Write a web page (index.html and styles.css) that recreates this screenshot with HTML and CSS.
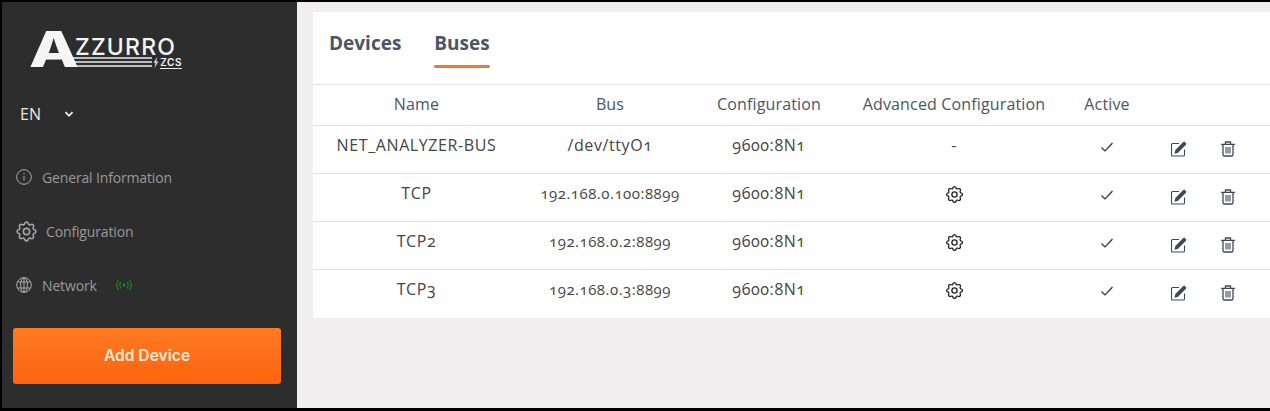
FILE: index.html
```html
<!DOCTYPE html>
<html lang="en">
<head>
<meta charset="utf-8">
<title>Azzurro ZCS - Buses</title>
<link rel="stylesheet" href="styles.css">
</head>
<body>
<div class="app">
  <aside class="sidebar">
    <div class="logo">
      <div class="logo-mark"><span class="logo-a">A</span></div>
      <div class="logo-right">
        <div class="logo-word">ZZURRO</div>
        <div class="logo-base">
          <div class="logo-stripes"><i></i><i></i><i></i></div>
          <svg class="bolt" viewBox="0 0 6 11"><path d="M4 0 .5 6h2L1.500 11 5.500 4.500h-2z" fill="currentColor"/></svg>
          <span class="logo-zcs">ZCS</span>
        </div>
      </div>
    </div>
    <div class="lang"><span>EN</span>
      <svg class="chev" viewBox="0 0 12 12"><path d="M2.500 4.200 6 7.800l3.500-3.600" fill="none" stroke="currentColor" stroke-width="1.800"/></svg>
    </div>
    <nav class="nav">
      <a class="nav-item">
        <svg class="nav-ic" viewBox="0 0 16 16" fill="none" stroke="currentColor"><circle cx="8" cy="8" r="7.300"/><path d="M8 7v4.500" stroke-width="1.100"/><circle cx="8" cy="4.800" r=".7" fill="currentColor" stroke="none"/></svg>
        <span>General Information</span>
      </a>
      <a class="nav-item">
        <svg class="nav-ic gear-lg" viewBox="0 0 24 24"><use href="#gear"/></svg>
        <span>Configuration</span>
      </a>
      <a class="nav-item">
        <svg class="nav-ic" viewBox="0 0 16 16" fill="none" stroke="currentColor" stroke-width="1"><circle cx="8" cy="8" r="7.300"/><ellipse cx="8" cy="8" rx="3.400" ry="7.300"/><path d="M8 .7v14.600M1.400 5h13.200M1.400 11h13.200"/></svg>
        <span>Network</span>
        <svg class="signal" viewBox="0 0 18 12" fill="none" stroke="currentColor" stroke-width="1.100"><circle cx="9" cy="6" r="1.400" fill="currentColor" stroke="none"/><path d="M6 3a4.200 4.200 0 0 0 0 6M12 3a4.200 4.200 0 0 1 0 6M3.600 1a7.500 7.500 0 0 0 0 10M14.400 1a7.500 7.500 0 0 1 0 10"/></svg>
      </a>
    </nav>
    <button class="add-btn">Add Device</button>
  </aside>
  <main class="main">
    <section class="card">
      <div class="tabs">
        <div class="tab">Devices</div>
        <div class="tab active">Buses</div>
      </div>
      <table class="grid">
        <colgroup><col class="c1"><col class="c2"><col class="c3"><col class="c4"><col class="c5"><col class="c6"><col class="c7"><col></colgroup>
        <thead>
          <tr><th>Name</th><th>Bus</th><th>Configuration</th><th>Advanced Configuration</th><th>Active</th><th></th><th></th><th></th></tr>
        </thead>
        <tbody>
          <tr>
            <td class="name">NET_ANALYZER-BUS</td><td class="txt">/dev/ttyO1</td><td class="txt">9600:8N1</td><td class="txt">-</td>
            <td><svg class="ic check" viewBox="0 0 14 12"><use href="#check"/></svg></td>
            <td class="act"><svg class="ic" viewBox="0 0 16 16"><use href="#edit"/></svg></td>
            <td class="act"><svg class="ic" viewBox="0 0 16 16"><use href="#trash"/></svg></td><td></td>
          </tr>
          <tr>
            <td class="name">TCP</td><td class="txt sm">192.168.0.100:8899</td><td class="txt">9600:8N1</td>
            <td><svg class="ic gear" viewBox="0 0 24 24"><use href="#gear"/></svg></td>
            <td><svg class="ic check" viewBox="0 0 14 12"><use href="#check"/></svg></td>
            <td class="act"><svg class="ic" viewBox="0 0 16 16"><use href="#edit"/></svg></td>
            <td class="act"><svg class="ic" viewBox="0 0 16 16"><use href="#trash"/></svg></td><td></td>
          </tr>
          <tr>
            <td class="name">TCP2</td><td class="txt sm">192.168.0.2:8899</td><td class="txt">9600:8N1</td>
            <td><svg class="ic gear" viewBox="0 0 24 24"><use href="#gear"/></svg></td>
            <td><svg class="ic check" viewBox="0 0 14 12"><use href="#check"/></svg></td>
            <td class="act"><svg class="ic" viewBox="0 0 16 16"><use href="#edit"/></svg></td>
            <td class="act"><svg class="ic" viewBox="0 0 16 16"><use href="#trash"/></svg></td><td></td>
          </tr>
          <tr>
            <td class="name">TCP3</td><td class="txt sm">192.168.0.3:8899</td><td class="txt">9600:8N1</td>
            <td><svg class="ic gear" viewBox="0 0 24 24"><use href="#gear"/></svg></td>
            <td><svg class="ic check" viewBox="0 0 14 12"><use href="#check"/></svg></td>
            <td class="act"><svg class="ic" viewBox="0 0 16 16"><use href="#edit"/></svg></td>
            <td class="act"><svg class="ic" viewBox="0 0 16 16"><use href="#trash"/></svg></td><td></td>
          </tr>
        </tbody>
      </table>
    </section>
  </main>
</div>
<svg class="defs" width="0" height="0">
  <defs>
    <g id="gear" fill="none" stroke="currentColor" stroke-width="1.500" stroke-linejoin="round">
      <path d="M10.325 4.317c.426-1.756 2.924-1.756 3.350 0a1.724 1.724 0 0 0 2.573 1.066c1.543-.94 3.310.826 2.370 2.370a1.724 1.724 0 0 0 1.065 2.572c1.756.426 1.756 2.924 0 3.350a1.724 1.724 0 0 0-1.066 2.573c.94 1.543-.826 3.310-2.370 2.370a1.724 1.724 0 0 0-2.572 1.065c-.426 1.756-2.924 1.756-3.350 0a1.724 1.724 0 0 0-2.573-1.066c-1.543.94-3.310-.826-2.370-2.370a1.724 1.724 0 0 0-1.065-2.572c-1.756-.426-1.756-2.924 0-3.350a1.724 1.724 0 0 0 1.066-2.573c-.94-1.543.826-3.310 2.370-2.370c1 .608 2.296.07 2.572-1.065z"/>
      <circle cx="12" cy="12" r="3"/>
    </g>
    <path id="check" d="M1.500 6.500 5 10l7.500-8" fill="none" stroke="currentColor" stroke-width="1.200"/>
    <g id="edit">
      <path d="M13.500 8.500V14a1 1 0 0 1-1 1H1.500a1 1 0 0 1-1-1V3.500a1 1 0 0 1 1-1H8" fill="none" stroke="currentColor" stroke-width="1.100"/>
      <path d="M13 .3 15.700 3 7 11.800l-3.600.9.900-3.600z" fill="currentColor"/>
    </g>
    <g id="trash" fill="none" stroke="currentColor" stroke-width="1.300">
      <path d="M1 3.300h14M5.500 3V1h5v2"/>
      <path d="M3 3.500v10.200A1.300 1.300 0 0 0 4.300 15h7.400a1.300 1.300 0 0 0 1.300-1.300V3.500"/>
      <path d="M6 6v6.500M8 6v6.500M10 6v6.500" stroke-width="1.100"/>
    </g>
  </defs>
</svg>
</body>
</html>
```
FILE: styles.css
```css
* { box-sizing: border-box; }
html, body { margin: 0; height: 100%; }
body {
  width: 1270px;
  height: 411px;
  overflow: hidden;
  background: #000;
  font-family: "Open Sans", "Noto Sans", sans-serif;
  font-feature-settings: "onum" 1;
  color: #4a5568;
}
.defs { position: absolute; }
.app {
  display: flex;
  height: 411px;
  padding: 2px 0 3px 2px;
}
.sidebar {
  width: 295px;
  flex: none;
  background: #2d2d2d;
  display: flex;
  flex-direction: column;
  padding: 29px 16px 0 11px;
}
.logo {
  display: flex;
  height: 40px;
  margin-left: 16px;
  color: #f5f5f5;
  font-family: Inter, sans-serif;
  font-feature-settings: normal;
}
.logo-mark { width: 46px; flex: none; height: 36px; }
.logo-a {
  display: block;
  font-size: 50px;
  font-weight: 800;
  line-height: 36px;
  transform: scaleX(1.3);
  transform-origin: left center;
}
.logo-right { width: 107px; padding-top: 8px; }
.logo-word {
  font-size: 23px;
  font-weight: 500;
  line-height: 17px;
  height: 17px;
  letter-spacing: 1.200px;
  white-space: nowrap;
  display: block;
}
.logo-base { display: flex; align-items: flex-start; margin: 0 0 0 -3px; gap: 1px; }
.logo-stripes { flex: 1; display: flex; flex-direction: column; gap: 2px; margin-top: 1px; }
.logo-stripes i { display: block; height: 2px; background: #bdbdbd; }
.bolt { width: 6px; height: 11px; margin-top: 1px; color: #ccc; flex: none; }
.logo-zcs { font-size: 10px; line-height: 11px; font-weight: 600; letter-spacing: 0.6px; border-bottom: 1px solid #eee; margin-top: 1px; }
.lang {
  margin: 33px 0 0 7px;
  display: flex;
  align-items: center;
  height: 20px;
  font-size: 16px;
  color: #f0e6e0;
}
.chev { width: 12px; height: 12px; margin-left: 22px; color: #eee; }
.nav { display: flex; flex-direction: column; margin-top: 26px; }
.nav-item {
  display: flex;
  align-items: center;
  height: 54px;
  padding-left: 3px;
  font-size: 14px;
  letter-spacing: -0.15px;
  color: #9a9a9a;
  gap: 10px;
}
.nav-ic { width: 16px; height: 16px; flex: none; stroke-width: 1; color: #aaa; }
.gear-lg { width: 25px; height: 25px; margin: 0 -3px 0 -2px; color: #a5a5a5; }
.signal { width: 18px; height: 12px; margin-left: 8px; color: #1c8a1c; }
.add-btn {
  margin-top: 16px;
  height: 56px;
  width: 268px;
  border: none;
  border-radius: 3px;
  padding: 0 0 2px;
  background: linear-gradient(#ff7a20, #fd6410);
  color: #ffe8d6;
  font: 600 15.600px Inter, sans-serif;
}
.main {
  flex: 1;
  min-width: 0;
  background: #f0eeee;
  padding: 10px 0 0 16px;
}
.card { background: #fff; height: 306px; }
.tabs {
  height: 72px;
  padding: 0 16px;
  display: flex;
  gap: 33px;
}
.tab {
  padding-top: 19px;
  font-size: 19px;
  line-height: 24px;
  font-weight: 700;
}
.tab.active { position: relative; }
.tab.active::after {
  content: "";
  position: absolute;
  left: 0; right: 0;
  top: 53px;
  height: 3px;
  border-radius: 2px;
  background: #f2792b;
}
.grid {
  width: 100%;
  table-layout: fixed;
  border-collapse: collapse;
  font-size: 16px;
  text-align: center;
}
.c1 { width: 207px; }
.c2 { width: 180px; }
.c3 { width: 138px; }
.c4 { width: 232px; }
.c5 { width: 74px; }
.c6 { width: 70px; }
.c7 { width: 28px; }
th, td { border-top: 1px solid #e2e2e2; padding: 0; }
th { height: 41px; font-weight: 500; letter-spacing: 0.15px; padding-bottom: 3px; }
td { height: 48px; padding-bottom: 8px; color: #444; }
.name { font-weight: 500; padding-bottom: 10px; letter-spacing: 0.6px; }
.txt { padding-bottom: 10px; letter-spacing: 0.6px; }
.sm { font-size: 15px; letter-spacing: 0.5px; }
.ic { display: inline-block; vertical-align: middle; }
.check { width: 14px; height: 12px; color: #333; }
.gear { width: 21px; height: 21px; color: #222; }
.act { padding-bottom: 4px; color: #3f4a5c; }
.act .ic { width: 16px; height: 16px; }
```
